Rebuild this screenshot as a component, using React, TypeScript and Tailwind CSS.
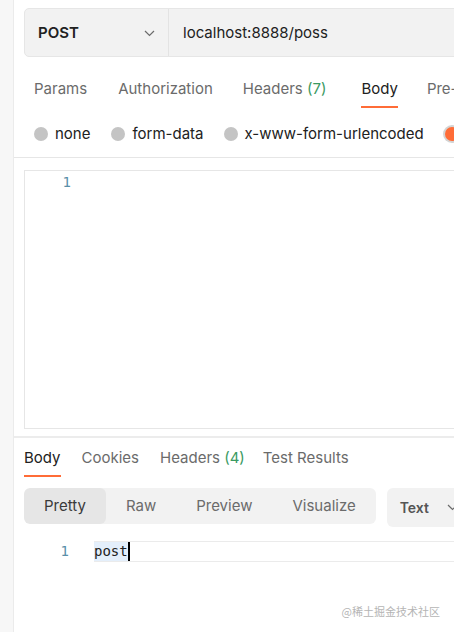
import React from "react";

const requestTabs = [
  { id: "params", title: "Params", ml: "ml-[20px]" },
  { id: "auth", title: "Authorization", ml: "ml-[31px]" },
  { id: "headers", title: "Headers", count: "(7)", ml: "ml-[30px]" },
  { id: "body", title: "Body", active: true, ml: "ml-[35px]" },
  { id: "pre", title: "Pre-request Script", ml: "ml-[29px]" },
];

const responseTabs = [
  { id: "body", title: "Body", active: true, ml: "ml-0" },
  { id: "cookies", title: "Cookies", ml: "ml-[21px]" },
  { id: "headers", title: "Headers", count: "(4)", ml: "ml-[21px]" },
  { id: "tests", title: "Test Results", ml: "ml-[18px]" },
];

const bodyModes = [
  { id: "none", title: "none", ml: "ml-[20px]" },
  { id: "form", title: "form-data", ml: "ml-[21px]" },
  { id: "urlencoded", title: "x-www-form-urlencoded", ml: "ml-[20px]" },
  { id: "raw", title: "raw", active: true, ml: "ml-[21px]" },
];

const views = [
  { id: "pretty", title: "Pretty", active: true },
  { id: "raw", title: "Raw" },
  { id: "preview", title: "Preview" },
  { id: "visualize", title: "Visualize" },
];

function Chevron() {
  return (
    <svg width="11" height="7" viewBox="0 0 11 7" fill="none" className="shrink-0">
      <path d="M1 1l4.5 4.5L10 1" stroke="#6b6b6b" strokeWidth="1.2" />
    </svg>
  );
}

function Tab({ title, count, active, ml }: { title: string; count?: string; active?: boolean; ml: string }) {
  return (
    <div className={`${ml} shrink-0 flex flex-col`}>
      <span className={`leading-[20px] whitespace-nowrap ${active ? "text-[#212121]" : "text-[#6b6b6b]"}`}>
        {title}
        {count && <span className="text-[#3a9a62]"> {count}</span>}
      </span>
      <div className={`mt-[7px] h-[2px] ${active ? "bg-[#ff6c37]" : "bg-transparent"}`} />
    </div>
  );
}

export default function App() {
  return (
    <div
      className="flex w-[454px] h-[632px] overflow-hidden bg-white text-[15px] text-[#212121]"
      style={{ fontFamily: "Inter, 'Noto Sans', sans-serif" }}
    >
      <div className="w-[14px] shrink-0 bg-[#f7f7f7] border-r border-[#ebebeb]" />

      <div className="flex-1 min-w-0 flex flex-col">
        {/* request */}
        <div className="pl-[10px] pt-[8px]">
          <div className="flex h-[49px] w-[460px] rounded-[5px] border border-[#e6e6e6] bg-[#f2f2f2]">
            <div className="w-[144px] shrink-0 flex items-center justify-between pt-[2px] pl-[13px] pr-[13px] border-r border-[#e3e3e3]">
              <span className="font-semibold text-[#212121]">POST</span>
              <Chevron />
            </div>
            <div className="flex items-center pt-[2px] pl-[14px] text-[#212121]">localhost:8888/poss</div>
          </div>
        </div>

        <div className="mt-[22px] flex w-[600px]">
          {requestTabs.map((t) => (
            <Tab key={t.id} {...t} />
          ))}
        </div>

        <div className="mt-[16px] flex items-center h-[20px] w-[600px]">
          {bodyModes.map((m) => (
            <div key={m.id} className={`${m.ml} shrink-0 flex items-center gap-[7px]`}>
              <span
                className={`size-[14px] rounded-full ${
                  m.active ? "bg-[#ff6c37] ring-2 ring-[#d4d4d4]" : "bg-[#c4c4c4]"
                }`}
              />
              <span className="whitespace-nowrap">{m.title}</span>
            </div>
          ))}
        </div>

        <div className="mt-[13px] h-px bg-[#e6e6e6]" />

        <div
          className="ml-[10px] mt-[12px] h-[259px] w-[460px] border border-[#e6e6e6] flex"
          style={{ fontFamily: "'DejaVu Sans Mono', monospace" }}
        >
          <div className="w-[46px] text-right text-[14px] leading-[22px] text-[#5a8fa8]">1</div>
        </div>

        <div className="mt-[7px] h-[2px] bg-[#ececec]" />

        {/* response */}
        <div className="pl-[10px]">
          <div className="mt-[10px] flex">
            {responseTabs.map((t) => (
              <Tab key={t.id} {...t} />
            ))}
          </div>

          <div className="mt-[11px] flex items-start gap-[11px] w-[480px]">
            <div className="flex h-[36px] rounded-[6px] bg-[#f2f2f2] overflow-hidden shrink-0">
              {views.map((v) => (
                <div
                  key={v.id}
                  className={`flex items-center px-[20px] ${
                    v.active ? "bg-[#e6e6e6] text-[#3a3a3a] rounded-[6px]" : "text-[#6b6b6b]"
                  }`}
                >
                  {v.title}
                </div>
              ))}
            </div>
            <div className="flex h-[39px] w-[120px] items-center gap-[18px] rounded-[6px] bg-[#f2f2f2] pl-[13px] shrink-0">
              <span className="font-semibold text-[#555555] text-[14px]">Text</span>
              <Chevron />
            </div>
          </div>

          <div
            className="mt-[14px] flex items-stretch h-[21px] text-[14px]"
            style={{ fontFamily: "'DejaVu Sans Mono', monospace" }}
          >
            <div className="w-[45px] shrink-0 text-right leading-[21px] text-[#5a8fa8]">1</div>
            <div className="ml-[25px] flex-1 flex border-y border-[#ebebeb]">
              <span className="bg-[#e4effb] leading-[19px] text-[#212121]">post</span>
              <span className="w-[2px] bg-black" />
            </div>
          </div>
        </div>

        <div className="mt-auto mb-[13px] self-end mr-[14px] text-[11px] text-[#b5b5b5]" style={{ fontFamily: "'Noto Sans CJK SC', sans-serif" }}>
          @稀土掘金技术社区
        </div>
      </div>
    </div>
  );
}
